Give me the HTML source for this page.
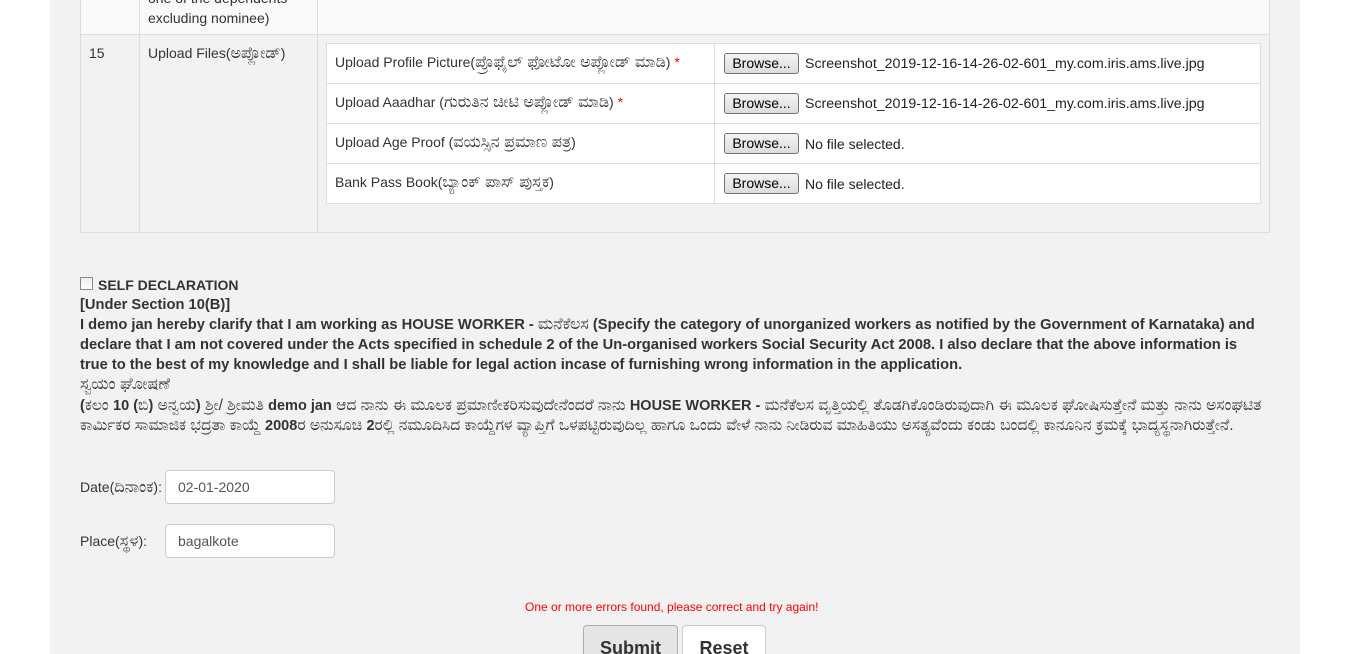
<!DOCTYPE html>
<html><head><meta charset="utf-8"><style>
*{box-sizing:border-box;margin:0;padding:0}
html,body{width:1366px;height:654px;overflow:hidden}
body{background:#fff;font-family:"Liberation Sans","Noto Sans CJK SC",sans-serif;font-size:14px;color:#333;position:relative}
.wrap{position:absolute;left:50px;top:0;width:1250px;height:654px;background:#f2f2f2}
.a{position:absolute;white-space:nowrap}
.bx{position:absolute;border:1px solid #ddd}
.btn{position:absolute;width:75px;height:21px;border:1px solid #707070;border-radius:3px;background:linear-gradient(#f4f4f4,#dcdcdc);font-size:14px;text-align:center;line-height:19px;color:#000}
.b{font-weight:bold}
.k{font-size:16px;font-weight:normal}
.inp{position:absolute;width:170px;height:34px;background:#fff;border:1px solid #ccc;border-radius:4px;padding-left:12px;line-height:32px;color:#555}
</style></head><body>
<div class="wrap"></div>
<div class="bx" style="left:80px;top:-1px;width:1190px;height:36px;background:#f9f9f9"></div>
<div class="bx" style="left:80px;top:34px;width:1190px;height:199px;background:#f2f2f2"></div>
<div style="position:absolute;left:139px;top:0;width:1px;height:233px;background:#ddd"></div>
<div style="position:absolute;left:317px;top:0;width:1px;height:233px;background:#ddd"></div>
<div class="a" style="left:148px;top:-12px;line-height:20px">one of the dependents<br>excluding nominee)</div>
<div class="a" style="left:89px;top:45px">15</div>
<div class="a" style="left:148px;top:45px">Upload Files(<span class="k">ಅಪ್ಲೋಡ್</span>)</div>
<div class="bx" style="left:326px;top:43px;width:935px;height:161px;background:#fff"></div>
<div style="position:absolute;left:714px;top:43px;width:1px;height:161px;background:#ddd"></div>
<div style="position:absolute;left:326px;top:83px;width:935px;height:1px;background:#ddd"></div>
<div style="position:absolute;left:326px;top:123px;width:935px;height:1px;background:#ddd"></div>
<div style="position:absolute;left:326px;top:163px;width:935px;height:1px;background:#ddd"></div>
<div class="a" style="left:335px;top:54px">Upload Profile Picture(<span class="k">ಪ್ರೊಫೈಲ್ ಫೋಟೋ ಅಪ್ಲೋಡ್ ಮಾಡಿ</span>) <span style="color:red">*</span></div>
<div class="a" style="left:335px;top:94px">Upload Aaadhar (<span class="k">ಗುರುತಿನ ಚೀಟಿ ಅಪ್ಲೋಡ್ ಮಾಡಿ</span>) <span style="color:red">*</span></div>
<div class="a" style="left:335px;top:134px">Upload Age Proof (<span class="k">ವಯಸ್ಸಿನ ಪ್ರಮಾಣ ಪತ್ರ</span>)</div>
<div class="a" style="left:335px;top:174px">Bank Pass Book(<span class="k">ಬ್ಯಾಂಕ್ ಪಾಸ್ ಪುಸ್ತಕ</span>)</div>
<div class="btn" style="left:724px;top:53px">Browse...</div>
<div class="btn" style="left:724px;top:93px">Browse...</div>
<div class="btn" style="left:724px;top:133px">Browse...</div>
<div class="btn" style="left:724px;top:173px">Browse...</div>
<div class="a" style="left:805px;top:56px;color:#222;font-size:14.2px">Screenshot_2019-12-16-14-26-02-601_my.com.iris.ams.live.jpg</div>
<div class="a" style="left:805px;top:96px;color:#222;font-size:14.2px">Screenshot_2019-12-16-14-26-02-601_my.com.iris.ams.live.jpg</div>
<div class="a" style="left:805px;top:136px;color:#222">No file selected.</div>
<div class="a" style="left:805px;top:176px;color:#222">No file selected.</div>
<div style="position:absolute;left:80px;top:277px;width:13px;height:13px;border:1px solid #888;background:linear-gradient(#eee,#fff)"></div>
<div class="a b" style="left:98px;top:277px;font-size:14px">SELF DECLARATION</div>
<div class="a b" style="left:80px;top:295px;line-height:20px;font-size:14.7px">[Under Section 10(B)]<br>
I demo jan hereby clarify that I am working as HOUSE WORKER - <span class="k">ಮನೆಕೆಲಸ</span> (Specify the category of unorganized workers as notified by the Government of Karnataka) and<br>declare that I am not covered under the Acts specified in schedule 2 of the Un-organised workers Social Security Act 2008. I also declare that the above information is<br>true to the best of my knowledge and I shall be liable for legal action incase of furnishing wrong information in the application.<br>
<span class="k">ಸ್ವಯಂ ಘೋಷಣೆ</span></div>
<div class="a" style="left:80px;top:396px;line-height:20px;font-size:15.5px"><b style="font-size:14.5px">(</b>ಕಲಂ <b style="font-size:14.5px">10 (</b>ಬಿ<b style="font-size:14.5px">)</b> ಅನ್ವಯ<b style="font-size:14.5px">)</b> ಶ್ರೀ/ ಶ್ರೀಮತಿ <b style="font-size:14.5px">demo jan</b> ಆದ ನಾನು ಈ ಮೂಲಕ ಪ್ರಮಾಣೀಕರಿಸುವುದೇನೆಂದರೆ ನಾನು <b style="font-size:14.5px">HOUSE WORKER -</b> ಮನೆಕೆಲಸ ವೃತ್ತಿಯಲ್ಲಿ ತೊಡಗಿಕೊಂಡಿರುವುದಾಗಿ ಈ ಮೂಲಕ ಘೋಷಿಸುತ್ತೇನೆ ಮತ್ತು ನಾನು ಅಸಂಘಟಿತ<br>ಕಾರ್ಮಿಕರ ಸಾಮಾಜಿಕ ಭದ್ರತಾ ಕಾಯ್ದೆ <b style="font-size:14.5px">2008</b>ರ ಅನುಸೂಚಿ <b style="font-size:14.5px">2</b>ರಲ್ಲಿ ನಮೂದಿಸಿದ ಕಾಯ್ದೆಗಳ ವ್ಯಾಪ್ತಿಗೆ ಒಳಪಟ್ಟಿರುವುದಿಲ್ಲ ಹಾಗೂ ಒಂದು ವೇಳೆ ನಾನು ನೀಡಿರುವ ಮಾಹಿತಿಯು ಅಸತ್ಯವೆಂದು ಕಂಡು ಬಂದಲ್ಲಿ ಕಾನೂನಿನ ಕ್ರಮಕ್ಕೆ ಭಾದ್ಯಸ್ಥನಾಗಿರುತ್ತೇನೆ.</div>
<div class="a" style="left:80px;top:479px">Date(<span class="k">ದಿನಾಂಕ</span>):</div>
<div class="inp" style="left:165px;top:470px">02-01-2020</div>
<div class="a" style="left:80px;top:533px">Place(<span class="k">ಸ್ಥಳ</span>):</div>
<div class="inp" style="left:165px;top:524px">bagalkote</div>
<div class="a" style="left:525px;top:600px;font-size:12px;color:red">One or more errors found, please correct and try again!</div>
<div style="position:absolute;left:583px;top:625px;width:95px;height:40px;border:1px solid #adadad;border-radius:4px;background:#e6e6e6;font-weight:bold;font-size:18px;text-align:center;line-height:44px">Submit</div>
<div style="position:absolute;left:682px;top:625px;width:84px;height:40px;border:1px solid #ccc;border-radius:4px;background:#fff;font-weight:bold;font-size:18px;text-align:center;line-height:44px">Reset</div>
</body></html>
